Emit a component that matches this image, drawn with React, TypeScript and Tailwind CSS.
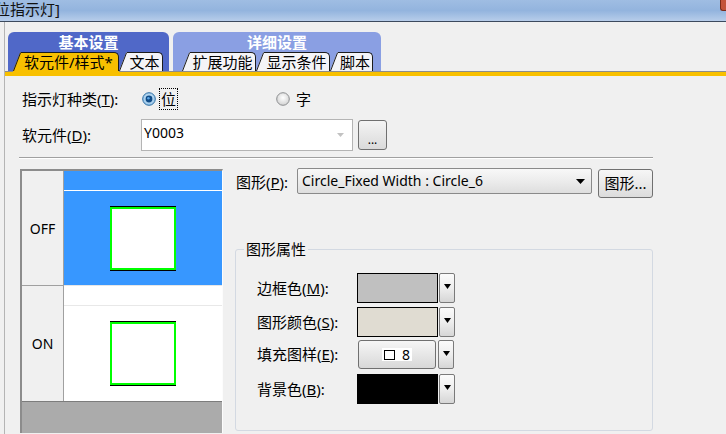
import React from "react";

const SubTab = ({
  label,
  active,
  width,
}: {
  label: string;
  active?: boolean;
  width: number;
}) => {
  const fill = active ? "#f8c000" : "#f4f4f7";
  return (
    <div className="flex h-[19px] items-stretch">
      <svg width="8" height="19" className="block shrink-0">
        <polygon points="0,19 7,1 8,0 8,19" fill={fill} />
        <line x1="0.5" y1="19" x2="7.6" y2="0.6" stroke="#1c1c1c" />
      </svg>
      <div
        className={
          active
            ? "bg-[#f8c000] border-t border-r border-[#1c1c1c] rounded-tr-[5px] text-[15px] leading-[18px] pl-[3px] text-black whitespace-nowrap"
            : "bg-[#f4f4f7] border-t border-r border-[#1c1c1c] rounded-tr-[5px] text-[15px] leading-[18px] text-center text-black whitespace-nowrap"
        }
        style={{ width }}
      >
        {label}
      </div>
    </div>
  );
};

const RadioOn = () => (
  <svg width="14" height="14" viewBox="0 0 14 14" className="block">
    <defs>
      <radialGradient id="ron" cx="50%" cy="45%" r="60%">
        <stop offset="0" stopColor="#d8ecfa" />
        <stop offset="1" stopColor="#8fc0e6" />
      </radialGradient>
    </defs>
    <circle cx="7" cy="7" r="6.3" fill="url(#ron)" stroke="#2d6da3" />
    <circle cx="7" cy="7" r="3.4" fill="#0e4a86" />
    <circle cx="6.4" cy="6.2" r="1.3" fill="#5aa4e4" />
  </svg>
);

const RadioOff = () => (
  <svg width="14" height="14" viewBox="0 0 14 14" className="block">
    <defs>
      <radialGradient id="roff" cx="50%" cy="40%" r="60%">
        <stop offset="0" stopColor="#ffffff" />
        <stop offset="1" stopColor="#d2d2d2" />
      </radialGradient>
    </defs>
    <circle cx="7" cy="7" r="6.3" fill="url(#roff)" stroke="#8c8e90" />
  </svg>
);

const DropBtn = ({ h }: { h: number }) => (
  <div
    className="w-[16px] ml-[1px] rounded-[2px] border border-[#7a7a7a] bg-linear-to-b from-[#fbfbfb] via-[#eeeeee] to-[#d6d6d6] flex justify-center pt-[10px]"
    style={{ height: h }}
  >
    <svg width="7" height="5" className="block">
      <polygon points="0,0 7,0 3.5,5" fill="#000" />
    </svg>
  </div>
);

const Mark = ({ c }: { c: string }) => <span className="underline">{c}</span>;

const Square = () => (
  <div className="w-[66px] h-[65px] border-y border-black">
    <div className="w-full h-full border-2 border-[#00ff00] bg-white" />
  </div>
);

export default function App() {
  return (
    <div className="w-[726px] h-[434px] overflow-hidden bg-[#f0f0f0] flex flex-col font-['Noto_Sans','Noto_Sans_CJK_SC',sans-serif] text-black">
      {/* title bar */}
      <div className="h-[21px] shrink-0 flex justify-between bg-linear-to-b from-[#9fbde3] via-[#93b4de] to-[#b7cdea]">
        <span className="ml-[-5px] text-[15px] leading-[19px] text-[#111]">位指示灯]</span>
        <div className="w-[6px] h-[11px] bg-[#c4523a] rounded-bl-[3px] border-l border-b border-[#7a2a1a]" />
      </div>
      <div className="h-[1px] shrink-0 bg-[#3c4a5e]" />

      <div className="flex-1 ml-[4px] border-l border-[#b4b4b4] flex flex-col">
        {/* tab strip */}
        <div className="flex items-end gap-[4px] pt-[10px] pl-[3px]">
          <div className="w-[161px] bg-[#5068c8] rounded-t-[6px] flex flex-col">
            <div className="h-[20px] text-center text-white font-bold text-[15px] leading-[21px]">基本设置</div>
            <div className="flex pl-[5px]">
              <SubTab label="软元件/样式*" active width={98} />
              <SubTab label="文本" width={36} />
            </div>
          </div>
          <div className="w-[208px] bg-[#8a9fe3] rounded-t-[6px] flex flex-col">
            <div className="h-[20px] text-center text-white font-bold text-[15px] leading-[21px]">详细设置</div>
            <div className="flex pl-[9px]">
              <SubTab label="扩展功能" width={66} />
              <SubTab label="显示条件" width={66} />
              <SubTab label="脚本" width={35} />
            </div>
          </div>
        </div>
        <div className="flex h-[1px]">
          <div className="w-[8px] bg-[#8c8c8c]" />
          <div className="w-[106px] bg-[#f8c000]" />
          <div className="flex-1 bg-[#8c8c8c]" />
        </div>
        <div className="h-[4px] bg-[#f8c000]" />

        {/* type row */}
        <div className="mt-[11px] pl-[17px] flex items-center h-[24px] text-[15px]">
          <div className="w-[120px]">
            指示灯种类(<Mark c="T" />):
          </div>
          <div className="w-[134px] flex items-center">
            <RadioOn />
            <span className="ml-[3px] px-[1px] border border-dotted border-black leading-[20px]">位</span>
          </div>
          <div className="flex items-center">
            <RadioOff />
            <span className="ml-[6px]">字</span>
          </div>
        </div>

        {/* device row */}
        <div className="mt-[8px] pl-[17px] flex items-center text-[15px]">
          <div className="w-[119px]">
            软元件(<Mark c="D" />):
          </div>
          <div className="w-[212px] h-[32px] bg-white border border-[#b4b4b4] flex items-center justify-between pl-[2px] pr-[8px] text-[14px]">
            <span className="leading-[20px] mt-[-4px]">Y0003</span>
            <svg width="7" height="4" className="block">
              <polygon points="0,0 7,0 3.5,4" fill="#c2c2c2" />
            </svg>
          </div>
          <div className="ml-[5px] w-[29px] h-[30px] rounded-[3px] border border-[#707070] bg-linear-to-b from-[#f4f4f4] to-[#dadada] flex items-end justify-center text-[12px] leading-[18px]">
            ...
          </div>
        </div>

        <div className="mt-[6px] ml-[14px] w-[634px] h-[1px] bg-[#a0a0a0]" />
        <div className="ml-[14px] w-[634px] h-[1px] bg-white" />

        {/* main area */}
        <div className="mt-[9px] flex">
          {/* state table */}
          <div className="ml-[15px] mt-[1px] w-[203px] h-[264px] border-t-2 border-l-2 border-r border-t-[#8c8c8c] border-l-[#8c8c8c] border-r-[#fcfcfc] flex flex-col text-[14px]">
            <div className="h-[114px] flex">
              <div className="w-[42px] border-r border-[#a0a0a0] flex items-center justify-center">OFF</div>
              <div className="flex-1 bg-[#3797ff] flex flex-col">
                <div className="h-[20px] border-b border-white" />
                <div className="flex-1 flex items-center justify-center">
                  <Square />
                </div>
              </div>
            </div>
            <div className="h-[1px] flex">
              <div className="w-[42px] bg-[#a0a0a0]" />
              <div className="flex-1 bg-[#e6e6e6]" />
            </div>
            <div className="h-[115px] flex">
              <div className="w-[42px] border-r border-[#a0a0a0] flex items-center justify-center">ON</div>
              <div className="flex-1 bg-white flex flex-col">
                <div className="h-[20px] border-b border-[#e8e8e8]" />
                <div className="flex-1 flex items-center justify-center">
                  <Square />
                </div>
              </div>
            </div>
            <div className="h-[1px] bg-[#7c7c7c]" />
            <div className="flex-1 bg-[#ababab]" />
          </div>

          {/* properties */}
          <div className="ml-[12px] w-[419px] flex flex-col text-[15px]">
            <div className="pl-[1px] flex items-start">
              <div className="w-[61px] h-[26px] leading-[28px] whitespace-nowrap">
                图形(<Mark c="P" />):
              </div>
              <div className="w-[295px] h-[26px] rounded-[2px] border border-[#8a8a8a] bg-linear-to-b from-[#f8f8f8] via-[#ececec] to-[#dedede] flex items-center justify-between pl-[4px] pr-[6px] text-[14px]">
                <span className="leading-[20px]">Circle_Fixed Width : Circle_6</span>
                <svg width="9" height="5" className="block">
                  <polygon points="0,0 9,0 4.5,5" fill="#000" />
                </svg>
              </div>
              <div className="ml-[6px] mt-[1px] w-[55px] h-[29px] rounded-[3px] border border-[#707070] bg-linear-to-b from-[#f6f6f6] to-[#dcdcdc] flex items-center justify-center">
                图形...
              </div>
            </div>

            <fieldset className="mt-[41px] w-[418px] h-[192px] border border-[#d3d9e2] rounded-[3px] pl-[21px] pt-[14px]">
              <legend className="ml-[-13px] px-[2px] leading-[20px]">图形属性</legend>
              <div className="flex items-center h-[30px]">
                <div className="w-[100px]">
                  边框色(<Mark c="M" />):
                </div>
                <div className="w-[81px] h-[30px] border border-black bg-[#c0c0c0]" />
                <DropBtn h={30} />
              </div>
              <div className="mt-[4px] flex items-center h-[30px]">
                <div className="w-[100px]">
                  图形颜色(<Mark c="S" />):
                </div>
                <div className="w-[81px] h-[30px] border border-black bg-[#e0dcd2]" />
                <DropBtn h={30} />
              </div>
              <div className="mt-[3px] flex items-center h-[29px]">
                <div className="w-[100px]">
                  填充图样(<Mark c="E" />):
                </div>
                <div className="ml-[1px] w-[78px] h-[29px] rounded-[3px] border border-[#707070] bg-linear-to-b from-[#f6f6f6] to-[#d8d8d8] flex items-center justify-center">
                  <div className="bg-white flex items-center px-[2px] h-[13px]">
                    <span className="w-[11px] h-[10px] border border-black" />
                    <span className="ml-[7px] text-[14px] leading-[13px]">8</span>
                  </div>
                </div>
                <div className="ml-[1px]">
                  <DropBtn h={29} />
                </div>
              </div>
              <div className="mt-[5px] flex items-center h-[30px]">
                <div className="w-[100px]">
                  背景色(<Mark c="B" />):
                </div>
                <div className="w-[81px] h-[30px] border border-black bg-black" />
                <DropBtn h={30} />
              </div>
            </fieldset>
          </div>
        </div>
      </div>
    </div>
  );
}
